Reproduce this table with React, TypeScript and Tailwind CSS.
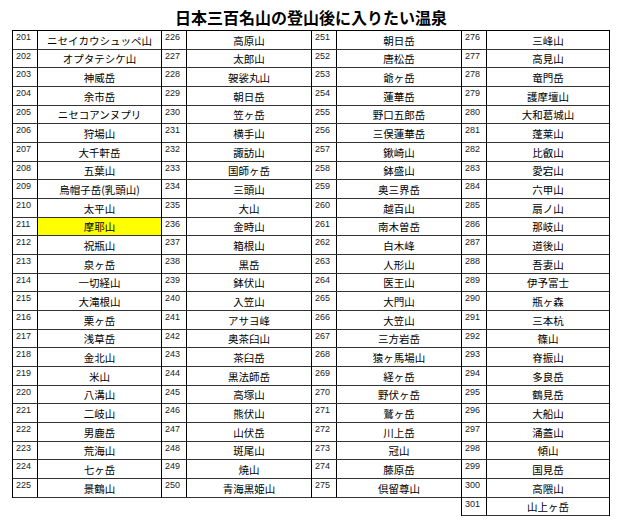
import React from "react";

type Row = [number, string, boolean?];

const cols: Row[][] = [
  [
    [201, "ニセイカウシュッペ山"],
    [202, "オプタテシケ山"],
    [203, "神威岳"],
    [204, "余市岳"],
    [205, "ニセコアンヌプリ"],
    [206, "狩場山"],
    [207, "大千軒岳"],
    [208, "五葉山"],
    [209, "烏帽子岳(乳頭山)"],
    [210, "太平山"],
    [211, "摩耶山", true],
    [212, "祝瓶山"],
    [213, "泉ヶ岳"],
    [214, "一切経山"],
    [215, "大滝根山"],
    [216, "栗ヶ岳"],
    [217, "浅草岳"],
    [218, "金北山"],
    [219, "米山"],
    [220, "八溝山"],
    [221, "二岐山"],
    [222, "男鹿岳"],
    [223, "荒海山"],
    [224, "七ヶ岳"],
    [225, "景鶴山"],
  ],
  [
    [226, "高原山"],
    [227, "太郎山"],
    [228, "袈裟丸山"],
    [229, "朝日岳"],
    [230, "笠ヶ岳"],
    [231, "横手山"],
    [232, "諏訪山"],
    [233, "国師ヶ岳"],
    [234, "三頭山"],
    [235, "大山"],
    [236, "金時山"],
    [237, "箱根山"],
    [238, "黒岳"],
    [239, "鉢伏山"],
    [240, "入笠山"],
    [241, "アサヨ峰"],
    [242, "奥茶臼山"],
    [243, "茶臼岳"],
    [244, "黒法師岳"],
    [245, "高塚山"],
    [246, "熊伏山"],
    [247, "山伏岳"],
    [248, "斑尾山"],
    [249, "焼山"],
    [250, "青海黒姫山"],
  ],
  [
    [251, "朝日岳"],
    [252, "唐松岳"],
    [253, "爺ヶ岳"],
    [254, "蓮華岳"],
    [255, "野口五郎岳"],
    [256, "三俣蓮華岳"],
    [257, "鍬崎山"],
    [258, "鉢盛山"],
    [259, "奥三界岳"],
    [260, "越百山"],
    [261, "南木曽岳"],
    [262, "白木峰"],
    [263, "人形山"],
    [264, "医王山"],
    [265, "大門山"],
    [266, "大笠山"],
    [267, "三方岩岳"],
    [268, "猿ヶ馬場山"],
    [269, "経ヶ岳"],
    [270, "野伏ヶ岳"],
    [271, "鷲ヶ岳"],
    [272, "川上岳"],
    [273, "冠山"],
    [274, "藤原岳"],
    [275, "倶留尊山"],
  ],
  [
    [276, "三峰山"],
    [277, "高見山"],
    [278, "竜門岳"],
    [279, "護摩壇山"],
    [280, "大和葛城山"],
    [281, "蓬莱山"],
    [282, "比叡山"],
    [283, "愛宕山"],
    [284, "六甲山"],
    [285, "扇ノ山"],
    [286, "那岐山"],
    [287, "道後山"],
    [288, "吾妻山"],
    [289, "伊予富士"],
    [290, "瓶ヶ森"],
    [291, "三本杭"],
    [292, "篠山"],
    [293, "脊振山"],
    [294, "多良岳"],
    [295, "鶴見岳"],
    [296, "大船山"],
    [297, "涌蓋山"],
    [298, "傾山"],
    [299, "国見岳"],
    [300, "高隈山"],
    [301, "山上ヶ岳"],
  ],
];

const widths = ["w-[149px]", "w-[150px]", "w-[150px]", "w-[149px]"];

function Column({ rows, w, last }: { rows: Row[]; w: string; last: boolean }) {
  return (
    <div
      className={`${w} flex flex-col border-t border-l border-black ${last ? "border-r" : ""}`}
    >
      {rows.map(([n, name, hl]) => (
        <div key={n} className="flex h-[18.68px] border-b border-[#333]">
          <div className="w-[25px] shrink-0 border-r border-black pl-[3px] pt-[1px] text-[9px] leading-[11px] text-[#222] font-['Liberation_Sans',sans-serif]">
            {n}
          </div>
          <div
            className={`flex-1 flex items-center justify-center pt-[2px] text-[10.5px] leading-none text-black font-['Noto_Sans_CJK_JP',sans-serif] ${hl ? "bg-[#ffff00]" : ""}`}
          >
            {name}
          </div>
        </div>
      ))}
    </div>
  );
}

export default function App() {
  return (
    <div className="w-[624px] h-[531px] bg-white">
      <div className="h-[30px] pl-[12px] w-[610px] flex items-center justify-center pt-[4px]">
        <h1 className="text-[16px] font-bold text-black leading-none font-['Noto_Sans_CJK_JP',sans-serif]">
          日本三百名山の登山後に入りたい温泉
        </h1>
      </div>
      <div className="flex items-start pl-[12px]">
        {cols.map((rows, i) => (
          <Column key={i} rows={rows} w={widths[i]} last={i === 3} />
        ))}
      </div>
    </div>
  );
}
